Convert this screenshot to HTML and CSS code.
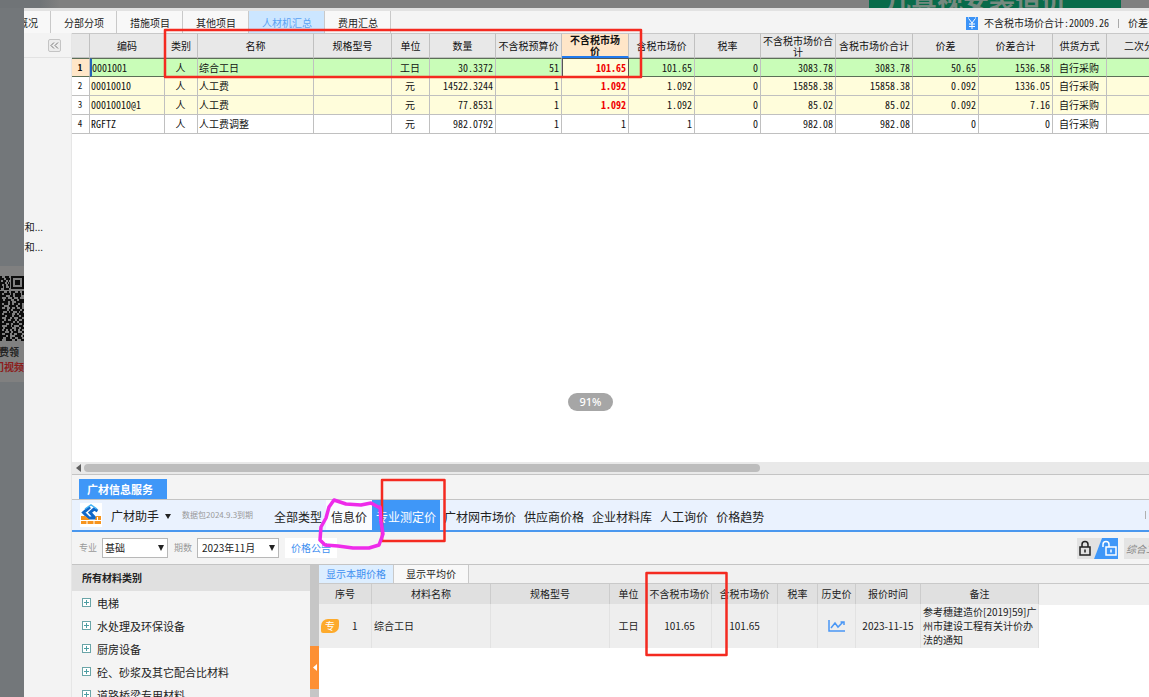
FILE: index.html
```html
<!DOCTYPE html>
<html lang="zh-CN">
<head>
<meta charset="utf-8">
<title>人材机汇总</title>
<link rel="stylesheet" href="styles.css">
</head>
<body>
<div class="page">
  <div class="backdrop-top"><div class="banner">几真视安装造价</div></div>
  <aside class="backdrop-left">
    <div class="qr-card">
      <svg class="qr" width="24" height="72" viewBox="0 0 24 72" role="img" aria-label="二维码">
        <g stroke="#0c0c0c" stroke-width="2" fill="none">
          <path d="M0 5h10" stroke-dasharray="2 3 4 1"/><path d="M0 7h10" stroke-dasharray="4 2"/>
          <path d="M0 9h10" stroke-dasharray="1 2 3 2"/><path d="M0 11h10" stroke-dasharray="5 2 1 1"/>
          <path d="M0 13h10" stroke-dasharray="2 2"/><path d="M0 15h10" stroke-dasharray="3 1 2 3"/>
          <path d="M0 17h10" stroke-dasharray="1 3 5 1"/><path d="M0 20h24" stroke-dasharray="4 3 2 2"/>
          <path d="M0 22h24" stroke-dasharray="2 2 6 1"/><path d="M0 24h24" stroke-dasharray="6 4 3 2"/>
          <path d="M0 26h24" stroke-dasharray="2 4"/><path d="M0 28h24" stroke-dasharray="3 2 6 3"/>
          <path d="M0 30h24" stroke-dasharray="8 2 2 4"/><path d="M0 32h24" stroke-dasharray="2 2 4 2"/>
          <path d="M0 34h24" stroke-dasharray="4 5 7 2"/><path d="M0 36h24" stroke-dasharray="2 3"/>
          <path d="M0 38h24" stroke-dasharray="7 2 2 2"/><path d="M0 40h24" stroke-dasharray="3 4 2 1"/>
          <path d="M0 42h24" stroke-dasharray="2 2 8 3"/><path d="M0 44h24" stroke-dasharray="5 2"/>
          <path d="M0 46h24" stroke-dasharray="2 4 4 2"/><path d="M0 48h24" stroke-dasharray="4 2 2 3"/>
          <path d="M0 50h24" stroke-dasharray="2 2 9 2"/><path d="M0 52h24" stroke-dasharray="6 3 2 2"/>
          <path d="M0 54h24" stroke-dasharray="2 5 4 1"/><path d="M0 56h24" stroke-dasharray="3 2 7 4"/>
          <path d="M0 58h24" stroke-dasharray="2 2"/><path d="M0 60h24" stroke-dasharray="5 4 2 2"/>
          <path d="M0 62h24" stroke-dasharray="2 3 5 2"/><path d="M0 64h24" stroke-dasharray="6 2 2 5"/>
          <path d="M0 66h24" stroke-dasharray="3 3 4 2"/><path d="M0 68h24" stroke-dasharray="2 4 6 3"/>
          <rect x="12" y="5" width="11" height="11"/>
        </g>
        <rect x="15" y="8" width="5" height="5" fill="#0c0c0c"/>
      </svg>
      <p class="qr-text">免费领</p>
      <p class="qr-text qr-text-red">门视频</p>
    </div>
  </aside>

  <main class="window">
    <header class="topbar">
      <nav class="top-tabs">
        <button class="top-tab tab-cut">概况</button>
        <button class="top-tab">分部分项</button>
        <button class="top-tab">措施项目</button>
        <button class="top-tab">其他项目</button>
        <button class="top-tab tab-active">人材机汇总</button>
        <button class="top-tab">费用汇总</button>
      </nav>
      <div class="summary">
        <svg class="yen" width="12" height="13" viewBox="0 0 12 13"><rect width="12" height="13" fill="#3b93f7"/><path d="M3 2l3 4 3-4M6 6v6M3 7h6M3 9.500h6M2 1h1M9 1h1" stroke="#fff" fill="none"/></svg>
        <span class="sum-text">不含税市场价合计:20009.26</span>
        <span class="sum-divider"></span>
        <span class="sum-text">价差合计</span>
      </div>
    </header>

    <div class="work">
      <aside class="side">
        <div class="side-head">
          <button class="collapse" aria-label="收起"><svg width="9" height="7" viewBox="0 0 9 7"><path d="M4 .5L1 3.500l3 3M8 .5l-3 3 3 3" fill="none" stroke="#777"/></svg></button>
        </div>
        <div class="side-items"><span class="side-item">综合和...</span><span class="side-item">合和...</span></div>
      </aside>

      <div class="content">
        <section class="grid-area">
          <table class="grid">
            <colgroup><col class="w18"><col class="w75"><col class="w33"><col class="w116"><col class="w78"><col class="w38"><col class="w66"><col class="w66"><col class="w67"><col class="w66"><col class="w66"><col class="w75"><col class="w77"><col class="w66"><col class="w74"><col class="w54"><col class="w75"></colgroup>
            <thead><tr><th></th><th>编码</th><th>类别</th><th>名称</th><th>规格型号</th><th>单位</th><th>数量</th><th>不含税预算价</th><th class="col-focus">不含税市场价</th><th>含税市场价</th><th>税率</th><th>不含税市场价合计</th><th>含税市场价合计</th><th>价差</th><th>价差合计</th><th>供货方式</th><th>二次分析</th></tr></thead>
            <tbody>
              <tr class="row-selected"><td class="num c">1</td><td class="code">0001001</td><td class="c">人</td><td>综合工日</td><td></td><td class="c">工日</td><td class="r">30.3372</td><td class="r">51</td><td class="r red cell-focus">101.65</td><td class="r">101.65</td><td class="r">0</td><td class="r">3083.78</td><td class="r">3083.78</td><td class="r">50.65</td><td class="r">1536.58</td><td class="c">自行采购</td><td></td></tr>
              <tr class="row-yellow"><td class="num c">2</td><td>00010010</td><td class="c">人</td><td>人工费</td><td></td><td class="c">元</td><td class="r">14522.3244</td><td class="r">1</td><td class="r red">1.092</td><td class="r">1.092</td><td class="r">0</td><td class="r">15858.38</td><td class="r">15858.38</td><td class="r">0.092</td><td class="r">1336.05</td><td class="c">自行采购</td><td></td></tr>
              <tr class="row-yellow"><td class="num c">3</td><td>00010010@1</td><td class="c">人</td><td>人工费</td><td></td><td class="c">元</td><td class="r">77.8531</td><td class="r">1</td><td class="r red">1.092</td><td class="r">1.092</td><td class="r">0</td><td class="r">85.02</td><td class="r">85.02</td><td class="r">0.092</td><td class="r">7.16</td><td class="c">自行采购</td><td></td></tr>
              <tr><td class="num c">4</td><td>RGFTZ</td><td class="c">人</td><td>人工费调整</td><td></td><td class="c">元</td><td class="r">982.0792</td><td class="r">1</td><td class="r">1</td><td class="r">1</td><td class="r">0</td><td class="r">982.08</td><td class="r">982.08</td><td class="r">0</td><td class="r">0</td><td class="c">自行采购</td><td></td></tr>
            </tbody>
          </table>
        </section>
        <div class="hscroll">
          <svg width="5" height="8" viewBox="0 0 5 8"><path d="M5 0v8L0 4z" fill="#606060"/></svg>
          <div class="track"><div class="thumb"></div></div>
        </div>

        <section class="service">
          <div class="service-tabs"><button class="service-tab">广材信息服务</button></div>
          <div class="navbar">
            <svg class="logo" width="22" height="24" viewBox="0 0 22 24"><rect width="22" height="24" fill="#fff"/><path d="M10 4L3.500 9.500 9 15h6l-5-5.500 4-3.500 3.500 2" fill="none" stroke="#1268c9" stroke-width="3"/><path d="M5 6l6-4 6 4" fill="none" stroke="#45b4f5" stroke-width="1.500"/><path d="M1 13h4l5 4h5l1-4h5v8H1z" fill="#f7941e"/><path d="M1 17.500h20M7 18v3M14 18v3M17.500 14v3" stroke="#fff" fill="none"/></svg>
            <button class="brand">广材助手<svg class="caret" width="6" height="5" viewBox="0 0 6 5"><path d="M0 0h6L3 5z" fill="#222"/></svg></button>
            <span class="expire">数据包2024.9.3到期</span>
            <nav class="nav">
              <button class="nav-tab">全部类型</button><button class="nav-tab nav-light">信息价</button><button class="nav-tab nav-active">专业测定价</button><button class="nav-tab">广材网市场价</button><button class="nav-tab">供应商价格</button><button class="nav-tab">企业材料库</button><button class="nav-tab">人工询价</button><button class="nav-tab">价格趋势</button>
            </nav>
            <span class="nav-end"></span>
          </div>
          <div class="filters">
            <label class="flabel" for="major">专业</label>
            <span class="select-wrap"><select id="major" class="select select-a"><option>基础</option></select></span>
            <label class="flabel" for="period">期数</label>
            <span class="select-wrap"><select id="period" class="select select-b"><option>2023年11月</option></select></span>
            <button class="notice">价格公告</button>
            <div class="filter-right">
              <button class="locks" aria-label="锁定"><svg width="41" height="21" viewBox="0 0 41 21"><path d="M0 0h25l-8 21H0z" fill="#e2e2e2"/><path d="M25 0h16v21H17z" fill="#3f97f8"/><rect x="3" y="9" width="10" height="8" fill="none" stroke="#222" stroke-width="1.500"/><path d="M5 9V6.500c0-4 6-4 6 0V9M8 11.500v3" fill="none" stroke="#222" stroke-width="1.500"/><rect x="29" y="9" width="10" height="8" fill="none" stroke="#fff" stroke-width="1.500"/><path d="M26 9V6.500c0-4 6-4 6 0V9M34 11.500v3" fill="none" stroke="#fff" stroke-width="1.500"/></svg></button>
              <input class="search" aria-label="搜索材料" value="综合工日">
            </div>
          </div>
          <div class="split">
            <div class="tree-panel">
              <h2 class="tree-title">所有材料类别</h2>
              <ul class="tree">
                <li class="tree-item"><i class="plus"></i>电梯</li>
                <li class="tree-item"><i class="plus"></i>水处理及环保设备</li>
                <li class="tree-item"><i class="plus"></i>厨房设备</li>
                <li class="tree-item"><i class="plus"></i>砼、砂浆及其它配合比材料</li>
                <li class="tree-item"><i class="plus"></i>道路桥梁专用材料</li>
              </ul>
            </div>
            <div class="splitter"><button class="handle" aria-label="收起面板"><svg width="4" height="7" viewBox="0 0 4 7"><path d="M4 0v7L0 3.500z" fill="#fff"/></svg></button></div>
            <div class="price-panel">
              <div class="price-tabs"><button class="price-tab price-active">显示本期价格</button><button class="price-tab price-plain">显示平均价</button></div>
              <div class="price-body">
                <table class="price">
                  <colgroup><col class="w53"><col class="w119"><col class="w119"><col class="w38"><col class="w64"><col class="w66"><col class="w40"><col class="w38"><col class="w65"><col class="w118"></colgroup>
                  <thead><tr><th>序号</th><th>材料名称</th><th>规格型号</th><th>单位</th><th>不含税市场价</th><th>含税市场价</th><th>税率</th><th>历史价</th><th>报价时间</th><th>备注</th></tr></thead>
                  <tbody><tr>
                    <td><span class="seq"><span class="badge">专</span>1</span></td><td>综合工日</td><td></td><td class="c">工日</td><td class="c">101.65</td><td class="c">101.65</td><td></td>
                    <td class="c"><svg width="17" height="12" viewBox="0 0 17 12"><path d="M1 0v11h16M3 8l4-5 3 4 5-5M12.500 2H16v3" fill="none" stroke="#4a97f5" stroke-width="1.500"/></svg></td>
                    <td class="c">2023-11-15</td><td class="remark">参考穗建造价[2019]59]广州市建设工程有关计价办法的通知</td>
                  </tr></tbody>
                </table>
              </div>
            </div>
          </div>
        </section>
      </div>
    </div>
  </main>

  <span class="zoom-tip">91%</span>
  <svg class="marks" width="1149" height="697" viewBox="0 0 1149 697">
    <g fill="none" stroke="#f42a20" stroke-width="2.500" stroke-linejoin="round">
      <rect x="165" y="30" width="476" height="47"/><rect x="382" y="480" width="62.500" height="61"/><rect x="646.500" y="573" width="80" height="82"/>
    </g>
    <path d="M380 508L371 503 361 505 346 504 334 500 329 507 326 518 321 527 320 540 325 545 338 546 353 548 369 548 379 545 383 534 381 522 380 507" fill="none" stroke="#ee2bea" stroke-width="3.500" stroke-linejoin="round" stroke-linecap="round"/>
  </svg>
</div>
</body>
</html>
```

FILE: styles.css
```css
* { box-sizing: border-box; }
body {
  margin: 0;
  font: 10px/14px "Noto Sans CJK SC", sans-serif;
  color: #222;
}
button, input, select {
  font: inherit;
  color: inherit;
  margin: 0;
  padding: 0;
  border: 0;
  background: none;
  border-radius: 0;
}
p, ul, h2 { margin: 0; padding: 0; }
svg { display: block; flex: none; }

.page {
  position: relative;
  display: grid;
  grid-template: 8px 1fr / 24px 1fr;
  height: 100vh;
  overflow: hidden;
  background: #73777a;
}
.backdrop-top {
  grid-column: 1 / 3;
  display: flex;
  justify-content: flex-end;
  padding-right: 28px;
  overflow: hidden;
  background: linear-gradient(90deg, #707477 40px, #808080 60px);
}
.banner {
  display: flex;
  align-items: flex-end;
  width: 252px;
  padding-left: 16px;
  overflow: hidden;
  background: #086b4a;
  color: #75897f;
  font-size: 26px;
  line-height: 18px;
  font-weight: 700;
  white-space: nowrap;
}
.backdrop-left { padding-top: 258px; overflow: hidden; }
.qr-card { padding: 6px 0 8px; background: #808080; }
.qr-text {
  display: flex;
  justify-content: flex-end;
  padding-right: 5px;
  font-weight: 700;
  line-height: 15px;
  white-space: nowrap;
}
.qr-text-red { padding-right: 0; color: #8d1b1b; }

.window { display: flex; flex-direction: column; min-width: 0; min-height: 0; background: #fff; }
.topbar {
  display: flex;
  height: 25px;
  flex: none;
  border-top: 3px solid #e2e2e2;
  background: #f4f4f4;
}
.top-tabs { display: flex; }
.top-tab {
  padding: 2px 12px 0 13px;
  white-space: nowrap;
  border-right: 1px solid #c9c9c9;
  background: #f8f8f8;
}
.top-tab.tab-cut { display: flex; align-items: center; justify-content: flex-end; width: 27px; padding-left: 0; overflow: hidden; }
.top-tab.tab-active { background: #cce6ff; color: #5aa2f3; }
.summary {
  display: flex;
  align-items: center;
  width: 183px;
  margin-left: auto;
  padding-top: 2px;
  overflow: hidden;
  white-space: nowrap;
}
.yen { margin-right: 6px; }
.sum-text { flex: none; font-family: "Noto Sans Mono CJK SC", "Noto Sans CJK SC", sans-serif; }
.sum-divider { flex: none; width: 1px; height: 9px; margin: 0 9px; background: #aaa; }

.work { display: flex; flex: 1; min-height: 0; }
.side { width: 48px; flex: none; overflow: hidden; background: #f3f3f3; border-right: 1px solid #e6e6e6; }
.side-head { display: flex; justify-content: flex-end; align-items: center; height: 25px; padding-right: 10px; border-bottom: 1px solid #e2e2e2; }
.collapse { display: grid; place-items: center; width: 13px; height: 13px; border: 1px solid #c4c4c4; border-radius: 2px; background: #ececec; }
.side-items { display: flex; flex-direction: column; width: 19px; padding-top: 159px; overflow: hidden; }
.side-item { display: flex; justify-content: flex-end; line-height: 20px; white-space: nowrap; }

.content { display: flex; flex-direction: column; flex: 1; min-width: 0; }
.grid-area { flex: 1; min-height: 0; overflow: hidden; }
table { table-layout: fixed; border-spacing: 0; }
.grid { width: 1110px; font-family: "Noto Sans Mono CJK SC", "Noto Sans CJK SC", sans-serif; color: #111; line-height: 14px; }
.grid th {
  height: 24px;
  padding: 0 2px;
  background: #e8e8e8;
  border-right: 1px solid #c0c0c0;
  border-top: 1px solid #c8c8c8;
  border-bottom: 1px solid #c0c0c0;
  font-weight: 400;
  line-height: 11px;
}
.grid td {
  height: 19px;
  padding: 0 2px 0 1px;
  border-right: 1px solid #c0c0c0;
  border-bottom: 1px solid #c0c0c0;
  white-space: nowrap;
}
.grid td.num { background: #fff; font-size: 9px; }
.row-yellow td { background: #fffddb; }
.grid .row-selected td { background: #c9fdb8; border-top: 1px solid #5c6f57; border-bottom: 1px solid #5c6f57; }
.grid .row-selected td.num { background: #ffe6c8; font-weight: 700; }
.grid .row-selected td.code { border-left: 2px solid #2463b8; padding-left: 0; }
.grid .row-selected td.cell-focus { background: #fffddb; border: 1px solid #555; }
.grid th.col-focus { padding: 0 6px; background: #ffe6c8; border-bottom: 2px solid #1f7af0; font-weight: 700; word-break: break-all; line-break: anywhere; }
.grid .red { color: #f00000; font-weight: 700; }
.grid th:nth-child(12) { line-break: anywhere; }
.c { text-align: center; }
.r { text-align: right; }
.w18 { width: 18px; } .w33 { width: 33px; } .w38 { width: 38px; } .w40 { width: 40px; }
.w53 { width: 53px; } .w54 { width: 54px; } .w64 { width: 64px; } .w65 { width: 65px; }
.w66 { width: 66px; } .w67 { width: 67px; } .w74 { width: 74px; } .w75 { width: 75px; }
.w77 { width: 77px; } .w78 { width: 78px; } .w116 { width: 116px; } .w118 { width: 118px; } .w119 { width: 119px; }

.hscroll { display: flex; align-items: center; flex: none; height: 13px; padding-left: 4px; gap: 3px; background: #e9e9e9; border-bottom: 1px solid #c4c4c4; }
.track { flex: 1; }
.thumb { width: 63.5%; height: 8px; border-radius: 4px; background: #bdbdbd; }

.service { display: flex; flex-direction: column; flex: none; height: 222px; background: #f4f4f4; }
.service-tabs { display: flex; height: 25px; flex: none; padding: 4px 7px 0; border-bottom: 1px solid #c4c4c4; }
.service-tab { width: 88px; padding-right: 6px; background: #3f97f8; color: #fff; font-size: 11px; font-weight: 700; }
.navbar { display: flex; align-items: center; flex: none; height: 32px; padding-left: 8px; background: #eaf2fe; border-bottom: 2px solid #4a97ee; }
.brand { display: flex; align-items: center; margin-left: 9px; padding-top: 2px; font-size: 12px; white-space: nowrap; }
.caret { margin-left: 6px; }
.expire { width: 88px; margin-left: 11px; font-size: 8px; color: #999; white-space: nowrap; }
.nav { display: flex; align-self: stretch; }
.nav-tab { padding: 4px 4px 0; font-size: 12px; white-space: nowrap; }
.nav-light { padding: 4px 5px 0; background: #fafcff; }
.nav-active { background: #3f97f8; color: #fff; }
.nav-end { width: 1px; height: 8px; margin: 0 3px 0 auto; background: #b0b0b0; }
.filters { display: flex; align-items: center; flex: none; height: 33px; padding-left: 7px; border-bottom: 1px solid #c4c4c4; }
.flabel { font-size: 9px; color: #999; }
.select-wrap { position: relative; margin: 0 6px 0 5px; }
.select-wrap::after { content: ""; position: absolute; right: 4px; top: 7px; border: 3px solid transparent; border-top: 6px solid #222; border-bottom: 0; pointer-events: none; }
.select { display: block; height: 20px; padding-left: 2px; appearance: none; border: 1px solid #b8b8b8; background: #fff; }
.select-a { width: 66px; }
.select-b { width: 82px; padding-left: 4px; }
.notice { height: 20px; padding: 0 6px; background: #fff; color: #3f8ff0; }
.filter-right { display: flex; gap: 6px; width: 72px; margin-left: auto; overflow: hidden; }
.locks { flex: none; }
.search { width: 60px; height: 21px; flex: none; padding-left: 2px; background: #e4e4e4; color: #888; font-style: italic; }

.split { display: flex; flex: 1; min-height: 0; overflow: hidden; }
.tree-panel { width: 238px; flex: none; overflow: hidden; }
.tree-title { height: 26px; padding-left: 10px; background: #e0e0e0; font-size: 10px; line-height: 26px; }
.tree { list-style: none; }
.tree-item { display: flex; align-items: center; gap: 6px; height: 23px; padding-left: 10px; font-size: 11px; white-space: nowrap; }
.plus { width: 9px; height: 9px; border: 1px solid #6aa5a8; background: linear-gradient(#4d9da2, #4d9da2) center / 5px 1px no-repeat, linear-gradient(#4d9da2, #4d9da2) center / 1px 5px no-repeat, #fff; }
.splitter { display: flex; flex-direction: column; justify-content: flex-end; width: 9px; flex: none; padding-bottom: 8px; background: #c6c6c6; }
.handle { display: grid; place-items: center; height: 43px; background: #fd9034; }
.price-panel { display: flex; flex-direction: column; flex: 1; min-width: 0; background: #fff; }
.price-tabs { display: flex; flex: none; height: 18px; background: #f1f1f1; }
.price-tab { white-space: nowrap; border-right: 1px solid #c9c9c9; }
.price-active { padding: 0 7px; background: #ddeeff; color: #3f8ff0; }
.price-plain { padding: 0 12px; background: #f8f8f8; }
.price-body { flex: 1; background: linear-gradient(#f0f0f0, #f0f0f0) 0 0 / 100% 21px no-repeat; border-top: 1px solid #c9c9c9; }
.price { width: 720px; }
.price th { height: 20px; padding: 0; background: #e0e0e0; border-right: 1px solid #cccccc; font-weight: 400; white-space: nowrap; }
.price td { height: 44px; padding: 0 2px; background: #eeeeee; border-right: 1px solid #e2e2e2; }
.price td svg { margin: 0 auto; }
.seq { display: flex; align-items: center; gap: 13px; }
.badge { width: 18px; height: 14px; border-radius: 7px 2px 7px 2px; background: #fdaa2c; color: #fff; text-align: center; }
.price td.remark { padding: 0 1px 0 2px; white-space: normal; line-height: 14px; }

.zoom-tip {
  position: absolute;
  left: 568px;
  top: 393px;
  width: 45px;
  border-radius: 9px;
  background: #a6a6a6;
  color: #fff;
  font: 500 11px/18px "Noto Sans", sans-serif;
  text-align: center;
}
.marks { position: absolute; left: 0; top: 0; pointer-events: none; }
```
